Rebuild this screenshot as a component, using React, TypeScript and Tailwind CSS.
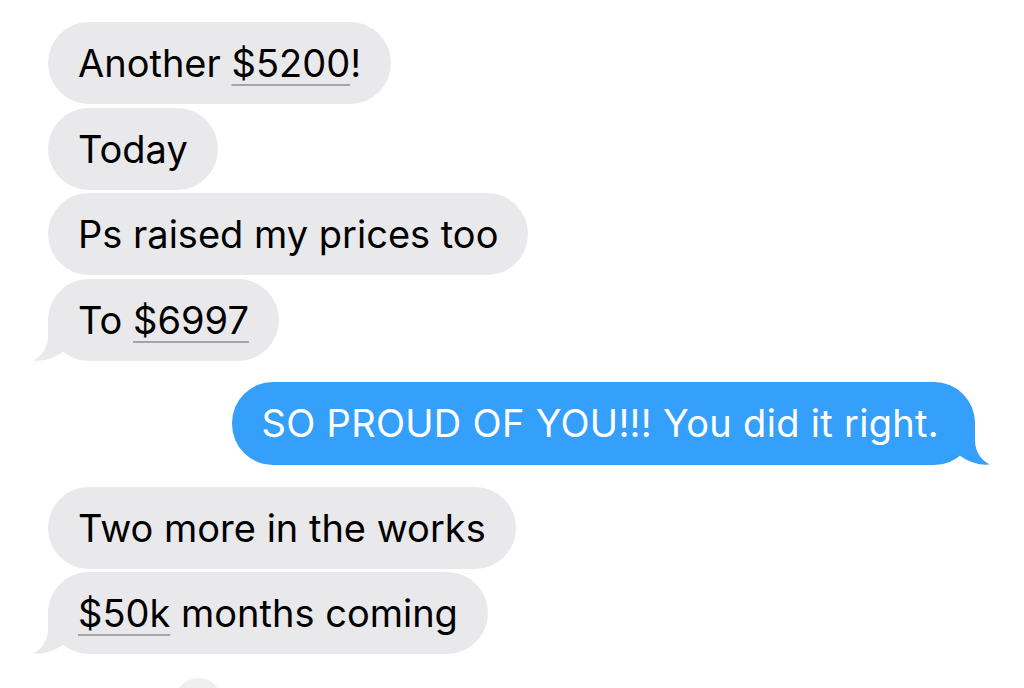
import React from 'react';

type Part = string | { money: string };

// 左边灰色气泡的小尾巴
function GrayTail() {
  return (
    <svg className="absolute left-[-16px] bottom-0" width="50" height="45" viewBox="0 0 50 45">
      <path d="M16 0 L16 20 C16 32 10 40 1 44.6 C12 45.6 22 42 31.5 35.5 L31.5 0 Z" fill="#e9e9eb" />
    </svg>
  );
}

// 右边蓝色气泡的小尾巴
function BlueTail() {
  return (
    <svg className="absolute right-[-16px] bottom-0" width="50" height="45" viewBox="0 0 50 45">
      <path d="M34 0 L34 20 C34 32 40 40 49 44.6 C38 45.6 28 42 18.5 35.5 L18.5 0 Z" fill="#35a0fb" />
    </svg>
  );
}

function Text({ parts }: { parts: Part[] }) {
  return (
    <span className="whitespace-nowrap">
      {parts.map((p, i) =>
        typeof p === 'string' ? (
          <span key={i}>{p}</span>
        ) : (
          <span key={i} className="underline decoration-[#a3a3a8] decoration-[2px] underline-offset-[7px]">
            {p.money}
          </span>
        )
      )}
    </span>
  );
}

function Gray({ parts, tail = false }: { parts: Part[]; tail?: boolean }) {
  return (
    <div className="relative h-[82px] rounded-[41px] bg-[#e9e9eb] px-[30px] flex items-center text-[38px] leading-none text-black">
      {tail && <GrayTail />}
      <span className="relative">
        <Text parts={parts} />
      </span>
    </div>
  );
}

export default function App() {
  return (
    <div className="w-[1024px] h-[688px] overflow-hidden bg-white pt-[22px] font-['Inter','Liberation_Sans',sans-serif]">
      <div className="flex flex-col items-start gap-[3.5px] pl-[48px]">
        <Gray parts={['Another ', { money: '$5200' }, '!']} />
        <Gray parts={['Today']} />
        <Gray parts={['Ps raised my prices too']} />
        <Gray parts={['To ', { money: '$6997' }]} tail />
      </div>

      <div className="flex justify-end pr-[49px] mt-[21px]">
        <div className="relative h-[83px] rounded-[41px] bg-[#35a0fb] pl-[30px] pr-[36px] flex items-center text-[38px] leading-none text-white tracking-[0.3px]">
          <BlueTail />
          <span className="relative whitespace-nowrap">SO PROUD OF YOU!!! You did it right.</span>
        </div>
      </div>

      <div className="flex flex-col items-start gap-[3.5px] pl-[48px] mt-[22px]">
        <Gray parts={['Two more in the works']} />
        <Gray parts={[{ money: '$50k' }, ' months coming']} tail />
      </div>

      <div className="pl-[175px] mt-[24px]">
        <div className="w-[47px] h-[47px] rounded-full bg-[#efeff0]" />
      </div>
    </div>
  );
}
